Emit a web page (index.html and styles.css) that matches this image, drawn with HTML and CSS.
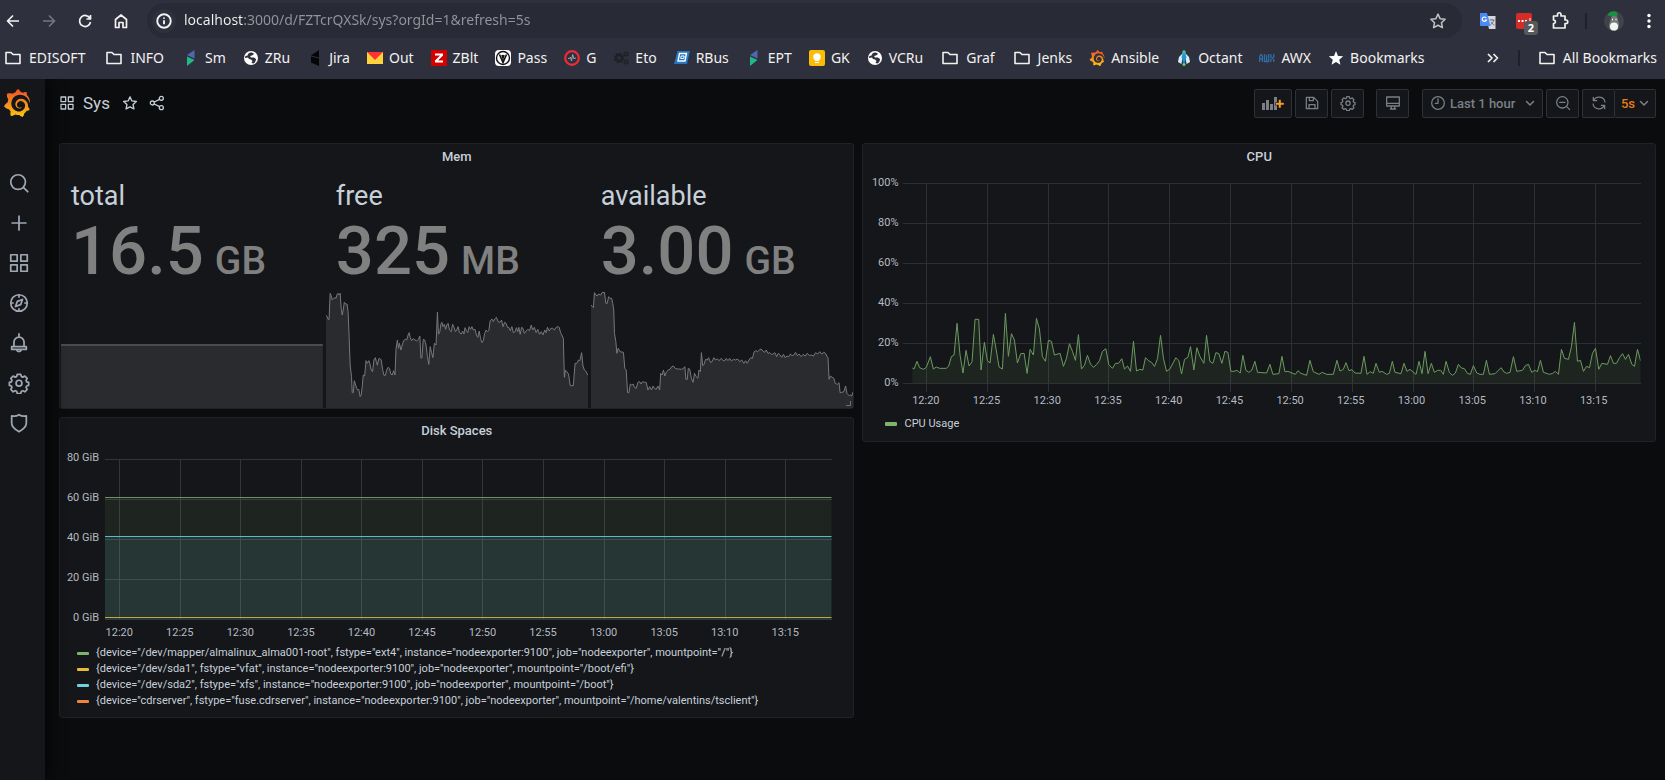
FILE: index.html
```html
<!DOCTYPE html>
<html lang="en">
<head>
<meta charset="utf-8">
<title>Sys - Grafana</title>
<link rel="stylesheet" href="styles.css">
</head>
<body>
<svg class="defs" width="0" height="0" aria-hidden="true">
  <defs>
    <linearGradient id="flame" x1="0" y1="1" x2="0" y2="0"><stop offset="0" stop-color="#fcc60e"/><stop offset=".5" stop-color="#f68a1e"/><stop offset="1" stop-color="#f04e28"/></linearGradient>
    <symbol id="folder" viewBox="0 0 20 20"><path d="M3 4.500h5l2 2h7v9H3z" fill="none" stroke="currentColor" stroke-width="1.600" stroke-linejoin="round"/></symbol>
    <symbol id="globe" viewBox="0 0 16 16"><circle cx="8" cy="8" r="7" fill="#fff"/><path d="M5.500 3.500c2-1.500 4-1 5.500.5l-2 1.500-2 .5 1 1.500h3l2 1.500c0 2-1 3.500-2.500 4.500l-2-.5 1-2-1.500-1.500-2-.5L5 7.500 2 8c0-.8.2-1.500.5-2l2-.5z" fill="#2f303d"/></symbol>
    <symbol id="prism" viewBox="0 0 16 16"><path d="M11.500 0v8.500L4 5z" fill="#5268ad"/><path d="M4 6.500l7.500 3.500L4 16z" fill="#1fb887"/></symbol>
    <symbol id="grafana" viewBox="0 0 24 24"><path d="M23.02 10.59a8.578 8.578 0 0 0-.862-3.034 8.911 8.911 0 0 0-1.789-2.445c.337-1.342-.413-2.505-.413-2.505-1.292-.08-2.113.4-2.416.62-.052-.02-.102-.044-.154-.064-.22-.089-.446-.172-.677-.247-.231-.073-.47-.14-.711-.197a9.867 9.867 0 0 0-.875-.161C14.557.753 12.94 0 12.94 0c-1.804 1.145-2.147 2.744-2.147 2.744l-.018.093c-.098.029-.2.057-.298.088-.138.042-.275.094-.413.143-.138.055-.275.107-.41.166a8.869 8.869 0 0 0-1.557.87l-.063-.029c-2.497-.955-4.716.195-4.716.195-.203 2.658.996 4.33 1.235 4.636a11.608 11.608 0 0 0-.607 2.635C1.636 12.677.953 15.014.953 15.014c1.926 2.214 4.171 2.351 4.171 2.351.003-.002.006-.002.006-.005.285.509.615.994.986 1.446.156.19.32.371.488.548-.704 2.009.099 3.68.099 3.68 2.144.08 3.553-.937 3.849-1.173a9.784 9.784 0 0 0 3.164.501h.08l.055-.003.107-.002.103-.005.003.002c1.01 1.44 2.788 1.646 2.788 1.646 1.264-1.332 1.337-2.653 1.337-2.94v-.058c0-.02-.003-.039-.003-.06.265-.187.52-.387.758-.6a7.875 7.875 0 0 0 1.415-1.7c1.43.083 2.437-.885 2.437-.885-.236-1.49-1.085-2.216-1.264-2.354l-.018-.013-.016-.013a.217.217 0 0 1-.031-.02c.008-.092.016-.18.02-.27.011-.162.016-.323.016-.48v-.253l-.005-.098-.008-.135a1.891 1.891 0 0 0-.01-.13c-.003-.042-.008-.083-.013-.125l-.016-.124-.018-.122a6.215 6.215 0 0 0-2.032-3.73 6.015 6.015 0 0 0-3.222-1.46 6.292 6.292 0 0 0-.85-.048l-.107.002h-.063l-.044.003-.104.008a4.777 4.777 0 0 0-3.335 1.695c-.332.4-.592.84-.768 1.297a4.594 4.594 0 0 0-.312 1.817l.003.091c.005.055.007.11.013.164a3.615 3.615 0 0 0 .698 1.82 3.53 3.53 0 0 0 1.827 1.282c.33.098.66.14.971.137.039 0 .078 0 .114-.002l.063-.003c.02 0 .041-.003.062-.003.034-.002.065-.007.099-.01.007 0 .018-.003.028-.003l.031-.005.06-.008a1.18 1.18 0 0 0 .112-.02c.036-.008.072-.013.109-.024a2.634 2.634 0 0 0 .914-.415c.028-.02.056-.041.085-.065a.248.248 0 0 0 .039-.35.244.244 0 0 0-.309-.06l-.078.042c-.09.044-.184.083-.283.116a2.476 2.476 0 0 1-.475.096c-.028.003-.054.006-.083.006l-.083.002c-.026 0-.054 0-.08-.002l-.102-.006h-.012l-.024.006c-.016-.003-.031-.003-.044-.006-.031-.002-.06-.007-.091-.01a2.59 2.59 0 0 1-.724-.213 2.557 2.557 0 0 1-.667-.438 2.52 2.52 0 0 1-.805-1.475 2.306 2.306 0 0 1-.029-.444l.006-.122v-.023l.002-.031c.003-.021.003-.04.005-.06a3.163 3.163 0 0 1 1.352-2.29 3.12 3.12 0 0 1 .937-.43 2.946 2.946 0 0 1 .776-.101h.06l.07.002.045.003h.026l.07.005a4.041 4.041 0 0 1 1.635.49 3.94 3.94 0 0 1 1.602 1.662 3.77 3.77 0 0 1 .397 1.414l.005.076.003.075c.002.026.002.05.002.075 0 .024.003.052 0 .07v.065l-.002.073-.008.174a6.195 6.195 0 0 1-.08.639 5.1 5.1 0 0 1-.267.927 5.31 5.31 0 0 1-.624 1.13 5.052 5.052 0 0 1-3.237 2.014 4.82 4.82 0 0 1-.649.066l-.039.003h-.287a6.607 6.607 0 0 1-1.716-.265 6.776 6.776 0 0 1-3.4-2.274 6.75 6.75 0 0 1-.746-1.15 6.616 6.616 0 0 1-.714-2.596l-.005-.083-.002-.02v-.056l-.003-.073v-.096l-.003-.104v-.07l.003-.163c.008-.22.026-.45.054-.678a8.707 8.707 0 0 1 .28-1.355c.128-.444.286-.872.473-1.277a7.04 7.04 0 0 1 1.456-2.1 5.925 5.925 0 0 1 .953-.763c.169-.111.343-.213.524-.306.089-.05.182-.091.273-.135.047-.02.093-.042.138-.062a7.177 7.177 0 0 1 .714-.267l.145-.045c.049-.015.098-.026.148-.041.098-.029.197-.052.296-.076.049-.013.1-.02.15-.033l.15-.032.151-.028.076-.013.075-.01.153-.024c.057-.01.114-.013.171-.023l.169-.021c.036-.003.073-.008.106-.01l.073-.008.036-.003.042-.002c.057-.003.114-.008.171-.01l.086-.006h.023l.037-.003.145-.007a7.999 7.999 0 0 1 1.708.125 7.917 7.917 0 0 1 2.048.68 8.253 8.253 0 0 1 1.672 1.09l.09.077.089.078c.06.052.114.107.171.159.057.052.112.106.166.16.052.055.107.107.159.164a8.671 8.671 0 0 1 1.41 1.978c.012.026.028.052.04.078l.04.078.075.156c.023.051.05.1.07.153l.065.15a8.848 8.848 0 0 1 .45 1.34.19.19 0 0 0 .201.142.186.186 0 0 0 .172-.184c.01-.246.002-.532-.024-.856z" fill="url(#flame)"/></symbol>
    <symbol id="apps" viewBox="0 0 24 24"><path d="M3 3h7v7H3zM14 3h7v7h-7zM3 14h7v7H3zM14 14h7v7h-7z" fill="none" stroke="currentColor" stroke-width="1.900" stroke-linejoin="round"/></symbol>
    <symbol id="star" viewBox="0 0 24 24"><path d="M12 2.800l2.800 6.100 6.700.8-4.900 4.600 1.300 6.600-5.900-3.200-5.900 3.200 1.300-6.600-4.900-4.600 6.700-.8z" fill="none" stroke="currentColor" stroke-width="2" stroke-linejoin="round"/></symbol>
    <symbol id="cog" viewBox="0 0 24 24"><path d="M10.100 2.500h3.800l.7 2.500 1.500.6 2.300-1.200 2.500 2.500-1.200 2.300.6 1.500 2.200.7v3.200l-2.200.7-.6 1.500 1.200 2.300-2.500 2.500-2.300-1.200-1.500.6-.7 2.500h-3.800l-.7-2.500-1.500-.6-2.300 1.200-2.500-2.500 1.200-2.300-.6-1.500-2.200-.7v-3.200l2.200-.7.600-1.500-1.200-2.300 2.500-2.500 2.300 1.200 1.500-.6z" fill="none" stroke="currentColor" stroke-width="1.900" stroke-linejoin="round"/><circle cx="12" cy="12.200" r="3.200" fill="none" stroke="currentColor" stroke-width="1.900"/></symbol>
    <symbol id="chev" viewBox="0 0 10 10"><path d="M1.500 3.500L5 7l3.500-3.500" fill="none" stroke="currentColor" stroke-width="1.500" stroke-linecap="round" stroke-linejoin="round"/></symbol>
  </defs>
</svg>

<header class="browser">
  <div class="toolbar">
    <nav class="nav-buttons">
      <button aria-label="Back"><svg viewBox="0 0 16 16"><path d="M14 8H3M8 2.500L2.500 8 8 13.500" class="line"/></svg></button>
      <button aria-label="Forward" class="off"><svg viewBox="0 0 16 16"><path d="M2 8h11M8 2.500L13.500 8 8 13.500" class="line"/></svg></button>
      <button aria-label="Reload"><svg viewBox="0 0 16 16"><path d="M13 5.500A5.500 5.500 0 1 0 13.500 9M13.500 2v4h-4" class="line"/></svg></button>
      <button aria-label="Home"><svg viewBox="0 0 16 16"><path d="M2.500 6.500L8 2l5.500 4.500v8H10V9.500H6v5H2.500z" class="line"/></svg></button>
    </nav>
    <div class="omnibox">
      <button class="info" aria-label="Site information"><svg viewBox="0 0 16 16"><circle cx="8" cy="8" r="6" class="line"/><path d="M8 7.300v3.500M8 4.800v1.300" class="line"/></svg></button>
      <input class="address" aria-label="Address" type="text" value="localhost:3000/d/FZTcrQXSk/sys?orgId=1&amp;refresh=5s">
      <button class="fav" aria-label="Bookmark this page"><svg viewBox="0 0 24 24"><use href="#star"/></svg></button>
    </div>
    <div class="extensions">
      <button class="ext" aria-label="Translate"><svg viewBox="0 0 16 16"><path d="M6 3h9.500v13H9z" fill="#d5d7dc"/><path d="M9.500 7h5M12 6v1M13.800 7c-.5 2.500-2 4-3.500 5M11 9c.8 1.500 2 2.500 3.500 3" stroke="#6b7380" fill="none"/><path d="M0 0h7l3.500 13H1a1 1 0 0 1-1-1z" fill="#4a8af4"/><path d="M6.300 5A2.200 2.200 0 1 0 6.500 7H4.700" stroke="#fff" stroke-width="1.200" fill="none"/></svg></button>
      <button class="ext ext-red" aria-label="Password manager"><svg viewBox="0 0 16 16"><rect width="16" height="16" rx="2" fill="#d32d27"/><path d="M2 7h2v2H2zM5.500 7h2v2h-2zM9 7h2v2H9zM13.500 5h1v5h-1z" fill="#fff"/></svg><span class="badge">2</span></button>
      <button aria-label="Extensions"><svg viewBox="0 0 16 16"><path d="M1.500 3h4V1.500a1.500 1.500 0 0 1 3.500 0V3h4v4h1a1.500 1.500 0 0 1 0 3.500h-1V15H1.500v-4.500c2.500 0 2.500-3.500 0-3.500z" class="line"/></svg></button>
      <span class="divider"></span>
      <button class="avatar" aria-label="Profile"><svg viewBox="0 0 20 20"><circle cx="10" cy="10" r="10" fill="#41424c"/><path d="M8 4h2l1 1h2l2 8c0 4-1.500 7-5 7s-5.500-3-5-6z" fill="#77797a"/><ellipse cx="10" cy="15.500" rx="4" ry="4" fill="#f4f4f0"/><path d="M8 8.500h1M11.500 8.500h1" stroke="#fff" stroke-width="1.500"/><path d="M4 3.500C6 0 12-1 13.500 2.500L13 6.500C10 4 7 5 4.500 5z" fill="#149342"/></svg></button>
      <button aria-label="Menu"><svg viewBox="0 0 16 16"><g fill="#fff"><circle cx="8" cy="2.500" r="1.700"/><circle cx="8" cy="8" r="1.700"/><circle cx="8" cy="13.500" r="1.700"/></g></svg></button>
    </div>
  </div>
  <nav class="bookmarks">
    <a href="#" class="dir lead"><svg><use href="#folder"/></svg>EDISOFT</a>
    <a href="#" class="dir lead"><svg><use href="#folder"/></svg>INFO</a>
    <a href="#"><svg><use href="#prism"/></svg>Sm</a>
    <a href="#"><svg><use href="#globe"/></svg>ZRu</a>
    <a href="#"><svg viewBox="0 0 16 16"><path d="M12 0v7.500L4 5.500zM4 6.500l8 2V16l-8-3.500z" fill="#050506"/></svg>Jira</a>
    <a href="#"><svg viewBox="0 0 16 16"><path d="M0 2h16v12H0z" fill="#fdd23c"/><path d="M0 2h16L8 10z" fill="#f33"/></svg>Out</a>
    <a href="#"><svg viewBox="0 0 16 16"><path d="M0 0h16v16H0z" fill="#d40000"/><path d="M4 3.500h8v2L7 10.500h5v2H4v-2l5-5H4z" fill="#fff"/></svg>ZBlt</a>
    <a href="#"><svg viewBox="0 0 16 16"><rect width="16" height="16" rx="4" fill="#fff"/><circle cx="8" cy="8" r="6.500" fill="none" stroke="#111" stroke-width="1.400"/><path d="M4.500 4.500L8 12.500l3.500-8M7 5l1 3 1-3" fill="none" stroke="#111" stroke-width="1.600"/></svg>Pass</a>
    <a href="#"><svg viewBox="0 0 16 16"><circle cx="8" cy="8" r="6.800" fill="none" stroke="#ee2b38" stroke-width="2.200"/><path d="M4 8.500h1.500L6.500 7l1 4L8.700 4.500 10 9l1-1h1" fill="none" stroke="#9aa5b5"/></svg>G</a>
    <a href="#"><svg viewBox="0 0 16 16"><g fill="none" stroke="#202126"><circle cx="6" cy="8" r="3" stroke-width="2.500"/><circle cx="6" cy="8" r="4.500" stroke-width="1.500" stroke-dasharray="2 1.500"/><circle cx="13" cy="4" r="1.700" stroke-width="1.600"/><circle cx="13" cy="12" r="1.700" stroke-width="1.600"/></g></svg>Eto</a>
    <a href="#"><svg viewBox="0 0 16 16"><path d="M3.500 1H16l-3 13H0z" fill="#2277c0"/><path d="M5.500 3.500h7L11 11H4z" fill="none" stroke="#fff" stroke-width="1.400"/><path d="M7.200 6h3l-.5 2.500h-3z" fill="none" stroke="#fff"/></svg>RBus</a>
    <a href="#"><svg><use href="#prism"/></svg>EPT</a>
    <a href="#"><svg viewBox="0 0 16 16"><rect width="16" height="16" rx="2" fill="#fbbc04"/><circle cx="8" cy="7" r="3.700" fill="#fff"/><path d="M6 9h4v2H6zM6 12h4v1H6z" fill="#fff"/></svg>GK</a>
    <a href="#"><svg><use href="#globe"/></svg>VCRu</a>
    <a href="#" class="dir"><svg><use href="#folder"/></svg>Graf</a>
    <a href="#" class="dir"><svg><use href="#folder"/></svg>Jenks</a>
    <a href="#"><svg><use href="#grafana"/></svg>Ansible</a>
    <a href="#"><svg viewBox="0 0 16 16"><path d="M7 3L3 7l-1 5 3.500 2zM9 3l4 4 1 5-3.500 2z" fill="#d5f0fa"/><path d="M8 1l2.500 6L8 15 5.500 7z" fill="#2196d6"/><circle cx="8" cy="2" r="1.800" fill="#46c5a5"/><circle cx="8" cy="14.500" r="1.500" fill="#6bcf6b"/></svg>Octant</a>
    <a href="#"><svg viewBox="0 0 16 16"><path d="M.7 12V6.500l1.300-2 1.500 2V12M.7 9h3M5.500 4v7.500h4.200V4M7.600 5v6M11.800 4v3l3 2.500V12M14.800 4v3l-3 2.500V12" fill="none" stroke="#2d6da3" stroke-width="1.300"/></svg>AWX</a>
    <a href="#"><svg viewBox="0 0 16 16"><path d="M8 1l2 5 5.200.3-4 3.400 1.300 5.100L8 12l-4.500 2.800 1.300-5.100-4-3.400L6 6z" fill="#fff"/></svg>Bookmarks</a>
    <button class="more" aria-label="More bookmarks"><svg viewBox="0 0 16 16"><path d="M3 4l4 4-4 4M8.500 4l4 4-4 4" class="line"/></svg></button>
    <span class="divider"></span>
    <a href="#" class="dir"><svg><use href="#folder"/></svg>All Bookmarks</a>
  </nav>
</header>

<div class="app">
  <aside class="sidebar">
    <a href="#" class="logo" aria-label="Grafana"><svg viewBox="0 0 24 24"><use href="#grafana"/></svg></a>
    <a href="#" aria-label="Search"><svg viewBox="0 0 24 24"><circle cx="11" cy="11" r="8" class="ln"/><path d="M17 17l4.500 4.500" class="ln"/></svg></a>
    <a href="#" aria-label="Create"><svg viewBox="0 0 24 24"><path d="M12 4.500v15M4.500 12h15" class="ln"/></svg></a>
    <a href="#" aria-label="Dashboards"><svg viewBox="0 0 24 24"><use href="#apps"/></svg></a>
    <a href="#" aria-label="Explore"><svg viewBox="0 0 24 24"><circle cx="12" cy="12" r="9" class="ln"/><path d="M15.800 8.200l-2 5.600-5.600 2 2-5.600zM12 3v2.500M12 18.500V21M3 12h2.500M18.500 12H21" class="ln"/></svg></a>
    <a href="#" aria-label="Alerting"><svg viewBox="0 0 24 24"><path d="M12 2v3M6.500 16v-5a5.500 5.500 0 0 1 11 0v5M4 16h16v3H4zM9.500 19.500c.5 2.500 4.500 2.500 5 0" class="ln"/></svg></a>
    <a href="#" aria-label="Configuration"><svg viewBox="0 0 24 24"><use href="#cog"/></svg></a>
    <a href="#" aria-label="Server admin"><svg viewBox="0 0 24 24"><path d="M12 3c2.500 1.700 5 2 8 1.300V12c0 4-3.500 7-8 9.500C7.500 19 4 16 4 12V4.300c3 .7 5.500.4 8-1.300z" class="ln"/></svg></a>
  </aside>

  <main class="page">
    <div class="page-head">
      <svg class="i16" viewBox="0 0 24 24"><use href="#apps"/></svg>
      <h1>Sys</h1>
      <button class="plain" aria-label="Mark as favorite"><svg class="i16" viewBox="0 0 24 24"><use href="#star"/></svg></button>
      <button class="plain" aria-label="Share dashboard"><svg class="i16" viewBox="0 0 24 24"><g class="ln"><circle cx="5" cy="12" r="3"/><circle cx="18.500" cy="5" r="3"/><circle cx="18.500" cy="19" r="3"/><path d="M8 10.500l7.800-4M8 13.500l7.800 4"/></g></svg></button>
      <div class="tools">
        <button class="btn add" aria-label="Add panel"><svg class="addicon" viewBox="0 0 22 16"><path d="M0 8h3v7H0zM4 5h3v10H4zM8 9h3v6H8zM12 2h3v13h-3z" fill="#7b8087"/><path d="M16.500 4.500h2.600v3h3v2.600h-3v3h-2.600v-3h-3V7.500h3z" fill="#f99b22" stroke="#141619" stroke-width=".6"/></svg></button>
        <button class="btn" aria-label="Save dashboard"><svg class="i16" viewBox="0 0 24 24"><path d="M3.500 3.500h11l6 6v11h-17zM8 3.500v5h6v-5M7.500 20.500v-6h9v6" class="ln"/></svg></button>
        <button class="btn" aria-label="Dashboard settings"><svg class="i16" viewBox="0 0 24 24"><use href="#cog"/></svg></button>
        <button class="btn view" aria-label="Cycle view mode"><svg class="i16" viewBox="0 0 24 24"><path d="M2.500 3h19v13.500h-19zM2.500 12.500h19M8 21h8M9.500 17v4M14.500 17v4" class="ln"/></svg></button>
        <button class="btn time"><svg class="i16" viewBox="0 0 24 24"><path d="M12 6v6.500H8" class="ln"/><circle cx="12" cy="12" r="9.500" class="ln"/></svg><span>Last 1 hour</span><svg class="i10"><use href="#chev"/></svg></button>
        <button class="btn" aria-label="Zoom out"><svg class="i16" viewBox="0 0 24 24"><circle cx="11" cy="11" r="8.500" class="ln"/><path d="M17.500 17.500L22 22M7 11h8" class="ln"/></svg></button>
        <div class="pair">
          <button class="btn" aria-label="Refresh"><svg class="i16" viewBox="0 0 24 24"><path d="M3.500 3.500v5h5M20.500 20.500v-5h-5M4 8.500A9 9 0 0 1 21 10.500M20 15.500A9 9 0 0 1 3 13.500" class="ln"/></svg></button>
          <button class="btn rate"><span>5s</span><svg class="i10"><use href="#chev"/></svg></button>
        </div>
      </div>
    </div>

    <div class="board">
      <div class="col">
        <section class="panel">
          <h2>Mem</h2>
          <div class="stats">
            <div class="stat"><div class="name">total</div><div class="value">16.5<small>GB</small></div>
              <svg class="spark" viewBox="0 0 759 354" preserveAspectRatio="none"><path class="fill" d="M0 164H759V354H0z"/><path class="stroke flat" d="M0 165H759"/></svg></div>
            <div class="stat"><div class="name">free</div><div class="value">325<small>MB</small></div>
              <svg class="spark" viewBox="19 480 759 354" preserveAspectRatio="none">
                <defs><path id="free" d="M19,556 23,560 25,568 28,568 31,490 34,497 37,510 41,505 45,503 48,505 51,493 54,490 57,495 60,490 63,535 66,555 69,540 72,517 76,522 80,522 83,545 86,620 89,705 93,740 95,788 98,788 101,752 105,765 108,775 111,780 114,778 118,800 121,795 124,770 127,735 131,738 135,692 139,700 143,692 146,700 150,720 154,725 158,690 162,683 165,695 168,706 172,686 176,686 179,690 183,718 187,736 191,736 195,720 199,712 203,715 207,732 211,735 215,722 219,735 222,655 226,630 229,655 232,640 236,660 240,645 244,632 249,628 253,630 257,615 260,608 263,622 267,632 272,626 277,630 282,633 287,628 291,618 294,684 297,684 301,628 305,630 309,645 313,680 317,703 321,650 325,668 329,683 333,640 338,645 342,546 345,613 349,605 352,583 355,577 358,590 362,583 366,598 369,585 373,580 377,600 382,605 386,583 390,592 394,605 398,600 402,590 406,608 411,612 415,603 419,612 422,593 426,602 430,608 434,590 438,598 442,590 446,600 451,598 455,615 459,622 463,603 467,625 471,638 475,632 479,610 483,600 487,605 491,602 495,572 500,567 504,575 508,567 513,562 518,575 523,577 528,570 532,590 537,577 541,580 545,592 549,592 553,602 558,590 562,608 567,605 571,593 575,605 578,592 582,613 586,592 590,595 594,610 599,603 604,598 609,602 614,585 618,600 623,592 628,608 633,598 638,613 643,605 648,615 653,600 657,608 661,592 666,603 671,595 676,595 681,600 686,592 691,590 695,592 699,608 704,618 707,625 710,742 713,720 717,725 722,732 727,767 736,767 741,700 746,700 751,690 755,692 760,668 764,708 768,720 772,723 778,735 790,735V900H0V556z"/></defs>
                <use href="#free" class="fill"/><use href="#free" class="stroke"/></svg></div>
            <div class="stat"><div class="name">available</div><div class="value">3.00<small>GB</small></div>
              <svg class="spark" viewBox="790 480 759 354" preserveAspectRatio="none">
                <defs><path id="avail" d="M790,525 794,530 797,533 800,488 804,495 808,498 812,492 818,495 822,488 829,487 833,520 837,520 841,500 845,505 850,505 853,520 856,540 858,610 862,635 865,670 869,655 874,665 884,667 888,715 892,720 896,788 900,788 904,762 908,765 912,762 916,772 921,775 926,757 931,755 935,762 940,755 945,757 950,757 955,780 960,770 965,780 970,768 974,775 979,778 984,768 989,780 992,730 996,735 1000,720 1004,738 1009,725 1014,720 1019,718 1024,710 1029,708 1034,715 1040,717 1046,717 1052,718 1058,715 1062,710 1065,748 1069,748 1072,715 1076,717 1081,745 1086,757 1090,730 1095,740 1100,745 1103,720 1107,725 1110,668 1114,707 1118,703 1122,688 1127,690 1131,683 1136,697 1141,695 1146,683 1151,690 1156,687 1162,692 1167,685 1172,690 1177,693 1182,685 1187,692 1192,685 1197,693 1203,688 1209,690 1215,687 1221,695 1227,690 1233,700 1238,692 1243,700 1248,690 1253,683 1258,685 1263,665 1268,662 1273,665 1278,660 1283,657 1288,663 1293,667 1298,660 1303,670 1308,668 1313,673 1318,672 1323,668 1328,680 1333,670 1338,675 1343,682 1348,673 1353,683 1358,678 1363,680 1368,672 1373,677 1378,675 1383,667 1388,677 1393,672 1399,680 1405,673 1411,678 1417,670 1423,677 1429,675 1435,678 1441,668 1447,672 1453,665 1459,672 1465,667 1470,670 1474,680 1477,682 1480,748 1484,738 1489,742 1494,745 1498,760 1504,763 1509,758 1512,788 1517,787 1523,785 1528,768 1532,790 1538,797 1542,795 1546,798 1549,787 1560,787V900H770V525z"/></defs>
                <use href="#avail" class="fill"/><use href="#avail" class="stroke"/></svg></div>
          </div>
          <svg class="resize" viewBox="0 0 5 5"><path d="M0 4.500h4.500V0" fill="none" stroke="#6e7074"/></svg>
        </section>

        <section class="panel">
          <h2>Disk Spaces</h2>
          <div class="graph disk">
            <div class="yaxis"><span>80 GiB</span><span>60 GiB</span><span>40 GiB</span><span>20 GiB</span><span>0 GiB</span></div>
            <svg class="plot" viewBox="195 159 2178 483" preserveAspectRatio="none">
              <path class="grid light" d="M195 160.500H2373M195 280.500H2373M195 400.500H2373M195 520.500H2373M195 640.500H2373M238.500 160V640M420 160V640M601.500 160V640M784.500 160V640M964.500 160V640M1146 160V640M1327.500 160V640M1510.500 160V640M1692 160V640M1873.500 160V640M2056.500 160V640M2236.500 160V640"/>
              <path fill="#7eb26d" fill-opacity=".1" d="M195 274H2373V640H195z"/>
              <path fill="#6ed0e0" fill-opacity=".1" d="M195 391H2373V640H195z"/>
              <path class="series" stroke="#6c9260" d="M195 274.500H2373"/>
              <path class="series" stroke="#57bccb" d="M195 391.500H2373"/>
              <path class="series" stroke="#c5a744" d="M195 634.500H2373"/>
            </svg>
            <div class="xaxis"><span>12:20</span><span>12:25</span><span>12:30</span><span>12:35</span><span>12:40</span><span>12:45</span><span>12:50</span><span>12:55</span><span>13:00</span><span>13:05</span><span>13:10</span><span>13:15</span></div>
          </div>
          <ul class="legend">
            <li class="green">{device="/dev/mapper/almalinux_alma001-root", fstype="ext4", instance="nodeexporter:9100", job="nodeexporter", mountpoint="/"}</li>
            <li class="yellow">{device="/dev/sda1", fstype="vfat", instance="nodeexporter:9100", job="nodeexporter", mountpoint="/boot/efi"}</li>
            <li class="cyan">{device="/dev/sda2", fstype="xfs", instance="nodeexporter:9100", job="nodeexporter", mountpoint="/boot"}</li>
            <li class="orange">{device="cdrserver", fstype="fuse.cdrserver", instance="nodeexporter:9100", job="nodeexporter", mountpoint="/home/valentins/tsclient"}</li>
          </ul>
        </section>
      </div>

      <div class="col">
        <section class="panel">
          <h2>CPU</h2>
          <div class="graph cpu">
            <div class="yaxis"><span>100%</span><span>80%</span><span>60%</span><span>40%</span><span>20%</span><span>0%</span></div>
            <svg class="plot" viewBox="160 159 2214 630" preserveAspectRatio="none">
              <path class="grid" d="M160 160.500H2374M160 280.500H2374M160 400.500H2374M160 520.500H2374M160 640.500H2374M160 760.500H2374M229.500 160V787M412.500 160V787M596 160V787M777 160V787M960 160V787M1143 160V787M1323.500 160V787M1506.500 160V787M1690 160V787M1870.500 160V787M2053.500 160V787M2236.500 160V787"/>
              <defs>
                <clipPath id="area"><path d="M188 160H2371V760H188z"/></clipPath>
                <path id="cpu" d="M180,714 188,714 193,717 202,694 210,713 221,718 230,712 242,680 251,717 260,711 270,715 290,715 297,708 305,680 313,675 322,580 331,675 340,729 349,661 358,708 367,695 376,568 387,568 394,720 404,637 413,692 421,699 431,613 440,663 448,711 458,717 467,550 476,679 485,611 494,630 503,699 513,671 523,670 532,730 541,658 551,675 560,565 569,597 578,680 587,694 596,631 605,634 614,675 631,670 641,709 650,685 659,641 668,664 677,691 686,614 695,717 704,706 713,676 722,702 731,712 740,704 749,692 758,664 768,656 777,704 788,715 797,700 806,700 816,686 824,717 833,708 842,724 851,634 860,723 870,718 879,720 887,683 896,692 905,697 914,709 923,686 932,616 941,686 950,724 960,717 978,683 987,692 995,732 1004,688 1014,682 1022,650 1032,720 1041,653 1050,679 1062,700 1070,616 1080,694 1089,700 1098,668 1107,671 1116,700 1125,664 1134,667 1143,724 1152,724 1161,721 1171,729 1179,676 1188,721 1197,727 1206,720 1215,694 1223,727 1250,729 1260,703 1269,733 1287,731 1296,679 1305,725 1314,724 1336,733 1344,722 1353,730 1370,736 1380,691 1390,725 1407,733 1417,727 1430,733 1450,733 1461,691 1470,723 1480,718 1488,698 1497,722 1506,719 1515,729 1533,730 1542,679 1551,733 1561,725 1570,730 1578,700 1588,727 1596,724 1610,733 1618,730 1627,694 1635,727 1653,731 1662,700 1671,724 1680,718 1698,733 1707,694 1716,731 1725,664 1734,731 1744,700 1753,727 1763,721 1772,721 1780,733 1788,694 1798,727 1807,736 1816,729 1825,703 1834,714 1843,716 1852,730 1861,733 1870,707 1880,729 1890,733 1900,733 1909,691 1918,733 1935,731 1953,713 1962,726 1970,730 1980,727 1990,680 2000,724 2017,721 2026,707 2035,703 2045,727 2054,721 2062,725 2071,691 2080,727 2098,733 2108,730 2116,724 2125,733 2134,658 2143,685 2155,688 2164,650 2173,577 2182,694 2191,691 2200,724 2209,709 2218,713 2227,670 2236,655 2246,718 2255,700 2272,703 2281,677 2290,700 2299,700 2308,683 2317,671 2326,688 2335,673 2345,703 2353,709 2362,658 2371,691 2380,691V780H180z"/>
              </defs>
              <g clip-path="url(#area)"><use href="#cpu" class="cpu-area"/><use href="#cpu" class="series cpu-line"/></g>
            </svg>
            <div class="xaxis"><span>12:20</span><span>12:25</span><span>12:30</span><span>12:35</span><span>12:40</span><span>12:45</span><span>12:50</span><span>12:55</span><span>13:00</span><span>13:05</span><span>13:10</span><span>13:15</span></div>
          </div>
          <ul class="legend cpu-legend"><li class="green">CPU Usage</li></ul>
        </section>
      </div>
    </div>
  </main>
</div>
</body>
</html>
```
FILE: styles.css
```css
* { box-sizing: border-box; }
body {
  margin: 0;
  min-height: 100vh;
  display: flex;
  flex-direction: column;
  background: #0b0c0e;
  color: #c7d0d9;
  font-family: Roboto, "Liberation Sans", sans-serif;
  font-size: 13px;
}
button { margin: 0; padding: 0; border: 0; background: none; color: inherit; font: inherit; }
a { color: inherit; text-decoration: none; }
svg { flex: none; }
.defs { position: absolute; }

/* Browser chrome */
.browser {
  background: #2f303d;
  color: #f2f2f0;
  font-family: "Noto Sans", "Open Sans", sans-serif;
  font-size: 14px;
  padding-top: 3px;
  position: relative;
  z-index: 2;
}
.toolbar { display: flex; height: 35px; }
.toolbar button { display: flex; align-items: center; justify-content: center; }
.line { fill: none; stroke: currentColor; stroke-width: 1.7; stroke-linejoin: round; }
.nav-buttons { display: flex; width: 147px; padding-left: 1px; gap: 12px; }
.nav-buttons button { width: 24px; }
.nav-buttons svg { width: 16px; height: 16px; }
.nav-buttons .off { color: #74757c; }
.omnibox { flex: 1; display: flex; align-items: center; background: #282a36; border-radius: 18px; padding: 0 15px 0 5px; }
.omnibox .info { width: 24px; height: 24px; border-radius: 12px; background: #2f303d; }
.info svg { width: 18px; height: 18px; }
.address {
  flex: 1;
  min-width: 0;
  margin-left: 8px;
  padding: 0 0 2px;
  border: 0;
  outline: 0;
  font: inherit;
  color: transparent;
  background: linear-gradient(90deg, #f2f2f0 60px, #93949c 60px);
  background-clip: text;
  -webkit-background-clip: text;
}
.fav { color: #c3c3c3; }
.fav svg { width: 18px; height: 18px; }
.extensions { display: flex; align-items: center; gap: 17px; padding: 0 8px 0 18px; }
.extensions svg { display: block; width: 16px; height: 16px; overflow: visible; }
.extensions .avatar svg { width: 20px; height: 20px; }
.ext { margin-right: 3px; }
.ext-red { position: relative; }
.badge {
  position: absolute;
  left: 8px;
  top: 8px;
  width: 14px;
  height: 14px;
  border-radius: 3px;
  background: #57585a;
  color: #fff;
  font-size: 11px;
  line-height: 14px;
  font-weight: 700;
}
.divider { width: 2px; height: 16px; background: #1f202a; }
.bookmarks { display: flex; align-items: center; height: 41px; padding: 0 8px 2px 3px; gap: 17px; white-space: nowrap; }
.bookmarks a { display: flex; align-items: center; gap: 6px; }
.bookmarks svg { width: 16px; height: 16px; }
.bookmarks .dir svg { width: 20px; height: 20px; }
.bookmarks .lead { margin-right: 2px; }
.more { margin-left: auto; display: flex; }

/* Application shell */
.app { flex: 1; display: flex; color: #9fa7b3; }
.sidebar {
  width: 45px;
  flex: none;
  padding: 8px 8px 0 0;
  background: #141619;
  box-shadow: 0 0 20px #000;
  z-index: 1;
}
.sidebar a { display: flex; height: 40px; padding-left: 1px; align-items: center; justify-content: center; }
.sidebar svg { width: 22px; height: 22px; }
.sidebar .logo { height: 32px; margin-bottom: 44px; padding: 0 4px 0 0; }
.sidebar .logo svg { width: 28px; height: 28px; }
.ln { fill: none; stroke: currentColor; stroke-width: 1.9; stroke-linejoin: round; stroke-linecap: round; }
.page { flex: 1; min-width: 0; padding: 0 9px 0 14px; }
.page-head { display: flex; align-items: center; height: 48px; margin-bottom: 16px; color: #c7d0d9; }
.i16 { display: block; width: 16px; height: 16px; }
.i10 { width: 10px; height: 10px; }
h1 { margin: 0 12px 0 8px; font-size: 17px; font-weight: 400; line-height: 24px; }
.plain { margin-right: 11px; }
.tools { display: flex; gap: 3px; margin-left: auto; color: #7b8087; }
.btn {
  display: flex;
  align-items: center;
  justify-content: center;
  min-width: 33px;
  height: 29px;
  background: #141619;
  border: 1px solid #2c3235;
  border-radius: 2px;
}
.add { width: 38px; }
.addicon { width: 22px; height: 16px; overflow: visible; }
.view { margin: 0 10px 0 9px; }
.time { width: 121px; justify-content: flex-start; padding: 0 7px; gap: 4px; font-weight: 500; }
.time .i10 { margin-left: auto; }
.pair { display: flex; }
.pair .btn:first-child { min-width: 32px; border-right: 0; border-radius: 2px 0 0 2px; }
.rate { width: 42px; gap: 4px; font-weight: 500; }
.rate span { color: #eb7b18; }

/* Panels */
.board { display: grid; grid-template-columns: 1fr 1fr; gap: 8px; }
.col { display: flex; flex-direction: column; gap: 8px; min-width: 0; }
.panel { position: relative; background: #141619; border: 1px solid #202226; border-radius: 3px; }
h2 { margin: 0; padding-left: 1px; color: #c7d0d9; font-size: 13px; font-weight: 500; line-height: 26px; text-align: center; }
.resize { position: absolute; right: 2px; bottom: 2px; width: 5px; height: 5px; }
.stats { display: grid; grid-template-columns: repeat(3, 1fr); gap: 3px; padding: 9px 0 0 1px; }
.stat { display: flex; flex-direction: column; }
.name { padding-left: 10px; color: #c7d0d9; font-size: 27px; line-height: 34px; }
.value { display: flex; align-items: baseline; gap: 11px; height: 77px; padding-left: 10px; color: #808080; font-size: 67px; font-weight: 500; line-height: 76px; white-space: nowrap; }
.value small { font-size: 39px; line-height: 40px; }
.spark { width: 100%; height: 118px; display: block; }
.fill { fill: #2a2b2e; }
.stroke { fill: none; stroke: #77787a; stroke-width: 1; vector-effect: non-scaling-stroke; }
.flat { stroke: #4a4b4e; stroke-width: 2; }
.spark path { vector-effect: non-scaling-stroke; }
.graph { display: grid; color: #b4bac2; font-size: 11px; line-height: 12px; }
.cpu { grid-template-columns: 36px 1fr; column-gap: 4px; padding: 7px 14px 0 0; }
.disk { grid-template-columns: 39px 1fr; column-gap: 6px; padding: 8px 21px 0 0; }
.yaxis { display: flex; flex-direction: column; justify-content: space-between; text-align: right; white-space: nowrap; }
.plot { width: 100%; display: block; }
.cpu .plot { height: 210px; margin-top: 6px; }
.cpu .yaxis { margin-bottom: 4px; }
.disk .plot { height: 161px; margin-top: 7px; }
.disk .yaxis { height: 172px; }
.grid { fill: none; stroke: #2c3034; stroke-width: 1; vector-effect: non-scaling-stroke; shape-rendering: crispEdges; }
.light { stroke: #c7d0d9; stroke-opacity: .17; }
.series { fill: none; stroke-width: 1; vector-effect: non-scaling-stroke; }
#cpu { vector-effect: non-scaling-stroke; }
.cpu-area { fill: #7eb26d; fill-opacity: .1; }
.cpu-line { stroke: #6c9a5e; }
.xaxis { grid-column: 2; display: grid; grid-template-columns: repeat(12, 1fr); text-align: center; }
.cpu .xaxis { margin: 2px 17px 0 -7px; }
.disk .xaxis { margin: 3px 16px 0 -16px; }
.legend { margin: 0; padding: 6px 0 8px 17px; list-style: none; color: #c7d0d9; font-size: 11px; line-height: 16px; white-space: nowrap; }
.legend li { display: flex; align-items: center; }
.legend li::before { content: ""; width: 12px; height: 3px; margin-right: 7px; border-radius: 1px; background: currentColor; }
.legend .green::before { color: #7eb26d; }
.legend .yellow::before { color: #eab839; }
.legend .cyan::before { color: #6ed0e0; }
.legend .orange::before { color: #ef843c; }
.legend.cpu-legend { padding: 9px 0 9px 22px; }
.cpu-legend li::before { height: 4px; margin-right: 8px; }
```
